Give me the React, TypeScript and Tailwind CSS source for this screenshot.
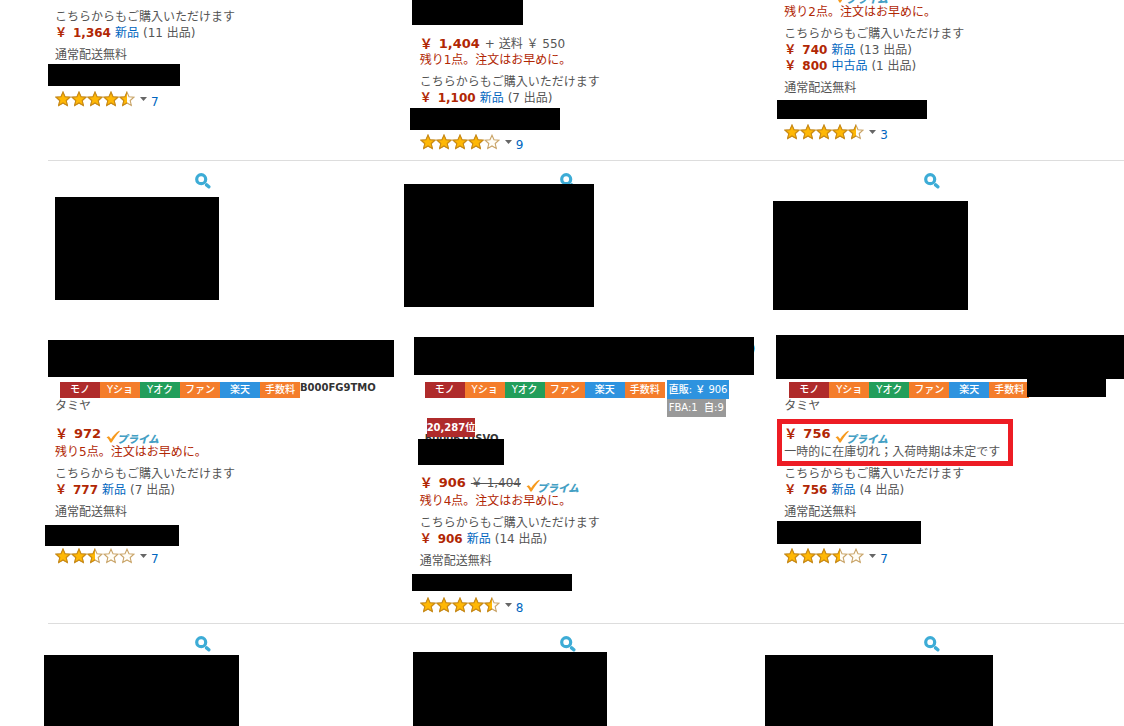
import type { ReactNode } from "react";

/* Opaque block that hides private content. */
function Mask({ className }: { className: string }) {
  return <div aria-hidden="true" className={`relative shrink-0 bg-black ${className}`} />;
}

function Magnifier() {
  return (
    <button type="button" aria-label="拡大" className="ml-[140px] block h-4 w-4">
      <svg viewBox="0 0 16 16" className="h-4 w-4">
        <circle cx="6.2" cy="6.2" r="4.5" fill="none" stroke="#3dacd6" strokeWidth="3.2" />
        <path d="M11.6 11.9l2.2 1.9" stroke="#3dacd6" strokeWidth="3.4" strokeLinecap="round" />
      </svg>
    </button>
  );
}

function Prime() {
  return (
    <a href="#prime" aria-label="プライム" className="mt-1 block h-4 w-[52px]">
      <svg viewBox="0 0 52 16" className="h-4 w-[52px] overflow-visible">
        <path d="M.5 7.2l2.4-.9 2.2 2.6C7.600 5.400 10 2.600 13.200.8l.6.6C10.600 4.700 8.200 8.200 5.700 12.400H4.300C3.300 10.200 2.200 8.500.5 7.200z" fill="#f79a1e" />
        <text x="11" y="13" fill="#44a0c4" fontSize="10.500" fontWeight="900" fontStyle="italic" fontFamily="'Noto Sans CJK JP', sans-serif">プライム</text>
      </svg>
    </a>
  );
}

const STAR = "M8 1.200l2 4.500 4.900.5-3.700 3.300 1.100 4.900L8 11.900l-4.300 2.500 1.100-4.900L1.100 6.200 6 5.700z";

function Star({ fill }: { fill: number }) {
  return (
    <svg viewBox="0 0 16 16" className="h-4 w-4">
      <path d={STAR} fill="#fffdf6" stroke="#c9a468" strokeWidth="1.100" />
      {fill > 0 && (
        <g style={{ clipPath: fill < 1 ? "inset(0 50% 0 0)" : undefined }}>
          <rect width="16" height="16" fill="none" />
          <path d={STAR} fill="#ffb805" stroke="#c98a14" strokeWidth="1.100" />
        </g>
      )}
    </svg>
  );
}

function Rating({ value, count, className }: { value: number; count: number; className: string }) {
  return (
    <div className={`flex h-4 ${className}`}>
      <button type="button" aria-label={`5つ星のうち ${value}`} className="flex h-4 items-center">
        {[0, 1, 2, 3, 4].map((i) => (
          <Star key={i} fill={Math.max(0, Math.min(1, value - i))} />
        ))}
        <svg viewBox="0 0 7 4" className="ml-[5px] h-1 w-[7px]">
          <path d="M0 0h7L3.500 4z" fill="#666" />
        </svg>
      </button>
      <a href="#reviews" className="mt-[3px] ml-1 text-[#0066c0]">{count}</a>
    </div>
  );
}

function Amount({ value, large }: { value: string; large?: boolean }) {
  return (
    <span className={large ? "flex gap-[6px] text-[13px] font-bold text-[#b12704]" : "flex gap-[6px] text-[12px] font-bold text-[#b12704]"}>
      <span>￥</span>
      <span>{value}</span>
    </span>
  );
}

function MainPrice({ value, children, className = "" }: { value: string; children?: ReactNode; className?: string }) {
  return (
    <div className={`flex h-[18px] gap-[5px] ${className}`}>
      <Amount value={value} large />
      {children}
    </div>
  );
}

function Offer({ price, kind, count }: { price: string; kind: string; count: number }) {
  return (
    <div className="flex h-4 gap-1">
      <Amount value={price} />
      <a href="#offers" className="text-[#0066c0]">{kind}</a>
      <span>({count} 出品)</span>
    </div>
  );
}

function Stock({ children, plain }: { children: ReactNode; plain?: boolean }) {
  return <p className={plain ? "h-4" : "h-4 text-[#b12704]"}>{children}</p>;
}

function MoreOffers({ children }: { children: ReactNode }) {
  return (
    <div className="mt-[6px]">
      <p className="h-4">こちらからもご購入いただけます</p>
      {children}
    </div>
  );
}

function FreeShipping() {
  return <p className="mt-[6px] h-4">通常配送無料</p>;
}

const TOOLS = [
  { label: "モノ", color: "bg-[#af2b2b]" },
  { label: "Yショ", color: "bg-[#f47d2b]" },
  { label: "Yオク", color: "bg-[#229e5b]" },
  { label: "ファン", color: "bg-[#f47d2b]" },
  { label: "楽天", color: "bg-[#2e93df]" },
  { label: "手数料", color: "bg-[#f47d2b]" },
];

function Tools() {
  return (
    <div className="flex shrink-0">
      {TOOLS.map((t) => (
        <a key={t.label} href="#search" className={`h-4 w-10 text-center text-[10px] leading-[15px] font-medium text-white ${t.color}`}>
          {t.label}
        </a>
      ))}
    </div>
  );
}

function Cell({ children }: { children: ReactNode }) {
  return <article className="min-w-0 px-[7px]">{children}</article>;
}

function Row({ children, className = "" }: { children: ReactNode; className?: string }) {
  return <section className={`-mr-[18px] grid grid-cols-3 ${className}`}>{children}</section>;
}

export default function App() {
  return (
    <main className="h-screen overflow-hidden bg-white pl-12 font-['DejaVu_Sans','Noto_Sans_CJK_JP',sans-serif] text-[12px] leading-4 whitespace-nowrap text-[#555]">
      <div className="-mt-4">
        <Row className="h-44">
          <Cell>
            <div className="mt-[3px]">
              <Stock>残り1点。注文はお早めに。</Stock>
            </div>
            <MoreOffers>
              <Offer price="1,364" kind="新品" count={11} />
            </MoreOffers>
            <FreeShipping />
            <Mask className="mt-px -ml-[7px] h-[22px] w-[132px]" />
            <Rating value={4.5} count={7} className="mt-[5px]" />
          </Cell>
          <Cell>
            <Mask className="-ml-2 h-[41px] w-[111px]" />
            <MainPrice value="1,404" className="mt-[11px] -mb-[2px]">
              <span>+ 送料 ￥ 550</span>
            </MainPrice>
            <Stock>残り1点。注文はお早めに。</Stock>
            <MoreOffers>
              <Offer price="1,100" kind="新品" count={7} />
            </MoreOffers>
            <Mask className="mt-[2px] -ml-[10px] h-[22px] w-[150px]" />
            <Rating value={4} count={9} className="mt-1" />
          </Cell>
          <Cell>
            <MainPrice value="740" className="mt-[2px]">
              <Prime />
            </MainPrice>
            <Stock>残り2点。注文はお早めに。</Stock>
            <MoreOffers>
              <Offer price="740" kind="新品" count={13} />
              <Offer price="800" kind="中古品" count={1} />
            </MoreOffers>
            <FreeShipping />
            <Mask className="mt-1 -ml-[7px] h-[19px] w-[150px]" />
            <Rating value={4.5} count={3} className="mt-[5px]" />
          </Cell>
        </Row>

        <Row className="h-[463px] border-t border-[#ddd] pt-3">
          <Cell>
            <Magnifier />
            <Mask className="mt-2 h-[103px] w-[164px]" />
            <Mask className="mt-10 -ml-[7px] h-[37px] w-[346px]" />
            <div className="mt-[5px] ml-[5px] flex h-4">
              <Tools />
              <span className="text-[10px] leading-3 font-bold text-[#333]">B000FG9TMO</span>
            </div>
            <p className="h-4">タミヤ</p>
            <MainPrice value="972" className="mt-3">
              <Prime />
            </MainPrice>
            <Stock>残り5点。注文はお早めに。</Stock>
            <MoreOffers>
              <Offer price="777" kind="新品" count={7} />
            </MoreOffers>
            <FreeShipping />
            <Mask className="mt-[5px] -ml-[10px] h-[21px] w-[134px]" />
            <Rating value={2.5} count={7} className="mt-[2px]" />
          </Cell>
          <Cell>
            <Magnifier />
            <Mask className="-mt-[5px] -ml-4 h-[123px] w-[190px]" />
            <div className="mt-[30px] -ml-[6px] flex h-[38px]">
              <Mask className="z-10 w-[340px]" />
              <a href="#item" className="mt-1 -ml-[3px] text-[#0066c0]">)</a>
            </div>
            <div className="mt-[5px] ml-[5px] flex gap-[2px]">
              <div className="mt-[2px]">
                <Tools />
              </div>
              <div className="flex flex-col items-start text-[10px] font-medium text-white">
                <span className="h-[19px] bg-[#2e93df] px-[2px] leading-[19px]">直販: ￥ 906</span>
                <span className="h-[18px] bg-[#999] px-[2px] leading-[18px]">FBA:1&nbsp; 自:9</span>
              </div>
            </div>
            <div className="mt-px ml-[5px] h-[21px] text-[10px] font-bold">
              <span className="relative z-10 ml-[2px] block h-[19px] w-12 bg-[#af2b2b] text-center leading-[19px] text-white">20,287位</span>
              <span className="-mt-1 block leading-3 text-[#333]">B00061USVO</span>
            </div>
            <Mask className="-ml-[2px] h-[26px] w-[86px]" />
            <MainPrice value="906" className="mt-[10px]">
              <s>￥ 1,404</s>
              <Prime />
            </MainPrice>
            <Stock>残り4点。注文はお早めに。</Stock>
            <MoreOffers>
              <Offer price="906" kind="新品" count={14} />
            </MoreOffers>
            <FreeShipping />
            <Mask className="mt-[5px] -ml-2 h-[17px] w-[160px]" />
            <Rating value={4.5} count={8} className="mt-[6px]" />
          </Cell>
          <Cell>
            <Magnifier />
            <Mask className="mt-3 -ml-[11px] h-[109px] w-[195px]" />
            <Mask className="mt-[25px] -ml-2 h-11 w-[348px]" />
            <div className="ml-[5px] flex h-[19px]">
              <div className="mt-[3px]">
                <Tools />
              </div>
              <Mask className="-ml-[2px] h-[18px] w-[79px]" />
            </div>
            <p className="h-4">タミヤ</p>
            <div className="-mb-[6px] mt-[5px] -ml-[7px] h-[47px] w-[236px] border-5 border-[#ed1c24] pt-[2px] pl-[2px]">
              <MainPrice value="756">
                <Prime />
              </MainPrice>
              <Stock plain>一時的に在庫切れ；入荷時期は未定です</Stock>
            </div>
            <MoreOffers>
              <Offer price="756" kind="新品" count={4} />
            </MoreOffers>
            <FreeShipping />
            <Mask className="mt-px -ml-[7px] h-[23px] w-36" />
            <Rating value={3.5} count={7} className="mt-1" />
          </Cell>
        </Row>

        <Row className="border-t border-[#ddd] pt-3">
          <Cell>
            <Magnifier />
            <Mask className="mt-[3px] -ml-[11px] h-[71px] w-[195px]" />
          </Cell>
          <Cell>
            <Magnifier />
            <Mask className="-ml-[7px] h-[74px] w-[194px]" />
          </Cell>
          <Cell>
            <Magnifier />
            <Mask className="mt-[3px] -ml-[19px] h-[71px] w-[228px]" />
          </Cell>
        </Row>
      </div>
    </main>
  );
}
